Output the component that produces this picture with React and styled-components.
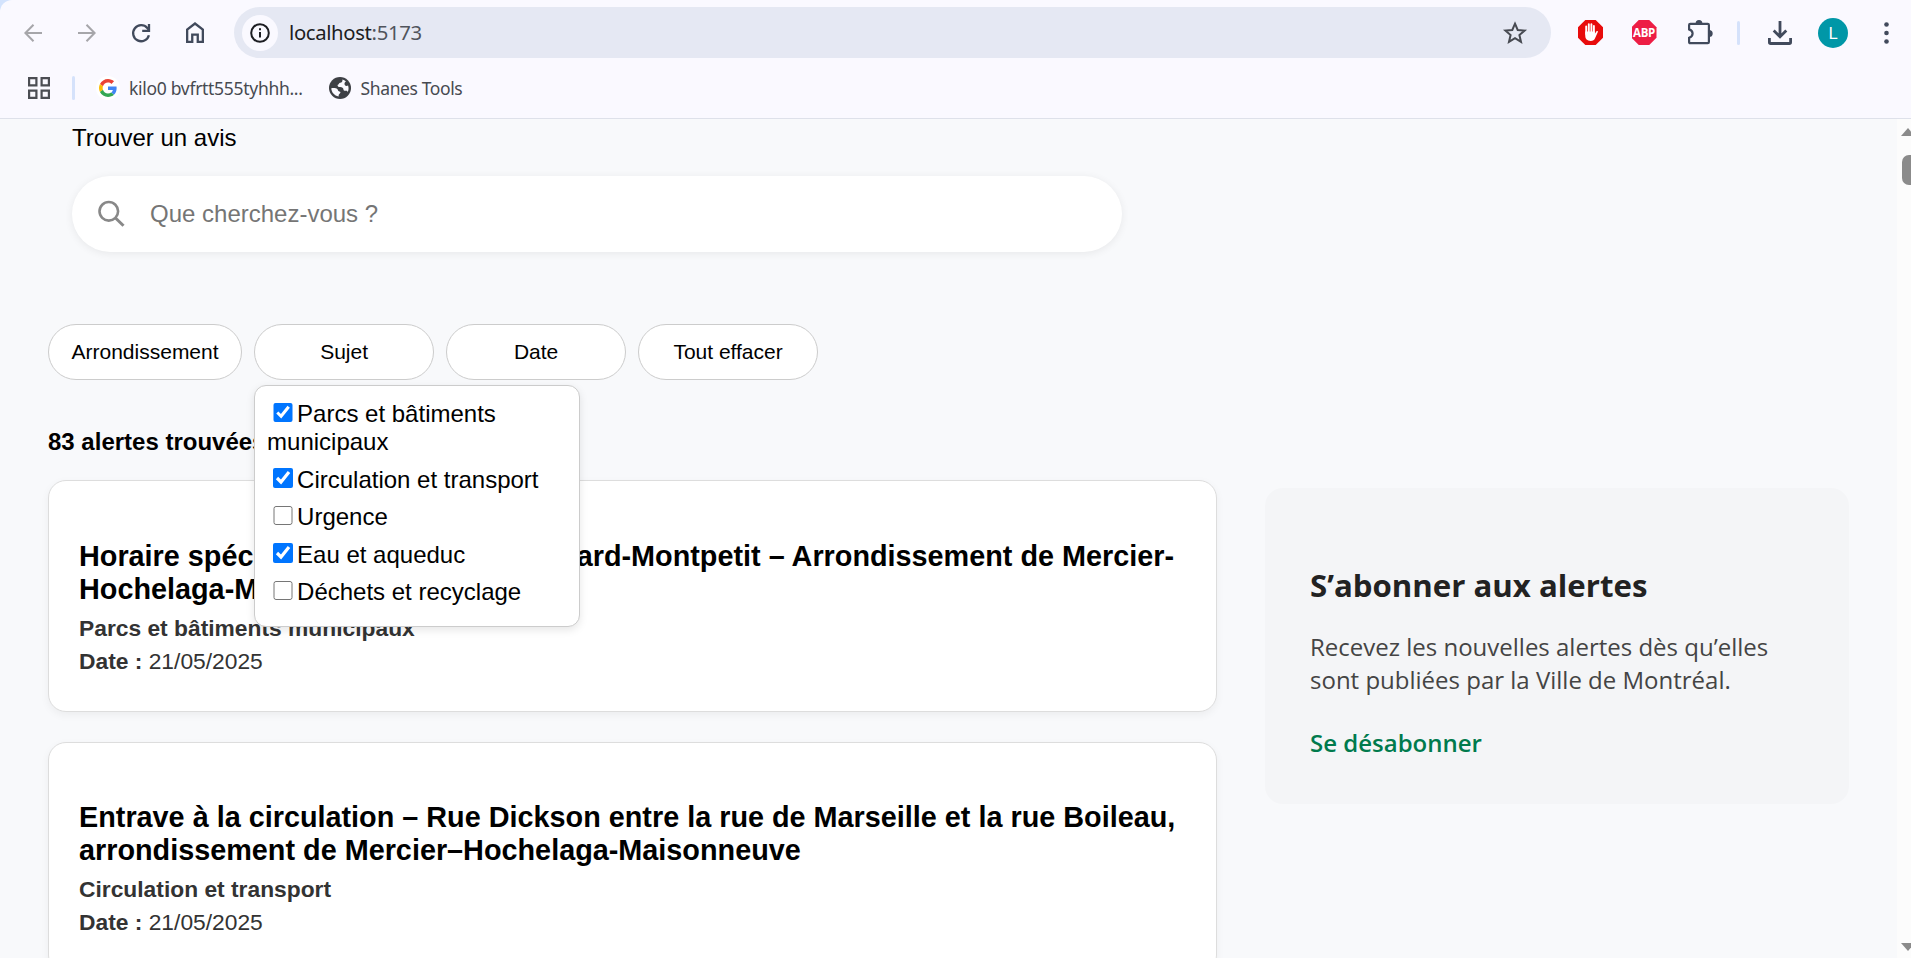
import React from "react";
import styled, { createGlobalStyle } from "styled-components";

const Global = createGlobalStyle`
  * { box-sizing: border-box; }
  body { margin: 0; overflow: hidden; background: #f8f9fb; }
`;

const arial = `"Liberation Sans", Arial, sans-serif`;
const humanist = `"Open Sans", "Noto Sans", sans-serif`;
const chromeText = `"Noto Sans", "Open Sans", sans-serif`;

const Window = styled.div`
  display: flex;
  flex-direction: column;
  width: 1911px;
  height: 958px;
  overflow: hidden;
  background: #d3e3fd;
`;

const BrowserHead = styled.header`
  flex: none;
  height: 119px;
  background: #faf9ff;
  border-bottom: 1px solid #dee1ea;
  border-top-left-radius: 12px;
`;

const Toolbar = styled.div`
  display: flex;
  align-items: center;
  height: 65px;
  padding-left: 18px;
`;

const ToolIcon = styled.span`
  display: flex;
  align-items: center;
  justify-content: center;
  flex: none;
  width: ${(p) => p.$w || 54}px;
  height: 40px;
  svg { display: block; overflow: visible; }
`;

const NavGroup = styled.div`
  display: flex;
  flex: none;
  width: 216px;
  margin-left: -12px;
`;

const AddressBar = styled.div`
  display: flex;
  align-items: center;
  flex: none;
  width: 1317px;
  height: 51px;
  margin-left: 12px;
  padding: 0 12px 0 8px;
  border-radius: 26px;
  background: #e5e8f3;
`;

const SiteInfo = styled.span`
  display: flex;
  align-items: center;
  justify-content: center;
  width: 36px;
  height: 36px;
  border-radius: 50%;
  background: #faf9ff;
`;

const Url = styled.span`
  flex: 1;
  margin-left: 11px;
  padding-bottom: 2px;
  font: 20.3px/28px ${chromeText};
  letter-spacing: -0.35px;
  color: #1c1d22;
  span { color: #50545c; }
`;

const Extensions = styled.div`
  display: flex;
  align-items: center;
  flex: none;
  margin-left: 12px;
`;

const Separator = styled.i`
  width: 3px;
  height: 24px;
  border-radius: 2px;
  background: #d5e2fb;
  margin: ${(p) => p.$m || "0"};
`;

const Avatar = styled.span`
  display: flex;
  align-items: center;
  justify-content: center;
  width: 30px;
  height: 30px;
  border-radius: 50%;
  background: #0097a7;
  color: #fff;
  font: 17px/30px Roboto, sans-serif;
`;

const Bookmarks = styled.nav`
  display: flex;
  align-items: center;
  height: 46px;
  padding-left: 28px;
`;

const Bookmark = styled.span`
  display: flex;
  align-items: center;
  gap: 9px;
  margin-left: ${(p) => p.$ml}px;
  font: 17.5px/24px ${chromeText};
  letter-spacing: ${(p) => p.$ls || 0}px;
  color: #474a51;
  white-space: nowrap;
  svg { display: block; }
`;

const Favicon = styled.span`
  display: flex;
  align-items: center;
  justify-content: center;
  width: 24px;
  height: 24px;
  border-radius: 50%;
  background: ${(p) => p.$bg || "transparent"};
`;

const Viewport = styled.div`
  display: flex;
  flex: 1;
  min-height: 0;
  background: #f8f9fb;
`;

const Page = styled.main`
  display: flex;
  align-items: flex-start;
  gap: 48px;
  flex: 1;
  min-width: 0;
  height: 839px;
  overflow: hidden;
  padding-left: 48px;
  font: 24px/27.6px ${arial};
  color: #000;
`;

const MainColumn = styled.section`
  flex: none;
  width: 1169px;
`;

const SearchSection = styled.div`
  padding: 5px 95px 0 24px;
`;

const SearchLabel = styled.div`
  height: 28px;
`;

const SearchPill = styled.div`
  display: flex;
  align-items: center;
  width: 1050px;
  height: 76px;
  margin-top: 24px;
  padding-left: 25px;
  gap: 24px;
  border-radius: 38px;
  background: #fff;
  box-shadow: 0 1.5px 9px rgba(0, 0, 0, 0.07);
`;

const SearchInput = styled.input`
  flex: 1;
  padding: 0;
  border: 0;
  outline: 0;
  background: transparent;
  font: 24px/28px ${arial};
  &::placeholder { color: #757575; opacity: 1; }
`;

const Filters = styled.div`
  display: flex;
  gap: 12px;
  margin-top: 72px;
`;

const FilterSlot = styled.div`
  position: relative;
`;

const FilterButton = styled.button`
  display: block;
  min-width: 180px;
  height: 56px;
  padding: 0 22.5px;
  border: 1px solid #ccc;
  border-radius: 30px;
  background: #fff;
  color: #000;
  font: 21px/24px ${arial};
`;

const Dropdown = styled.div`
  position: absolute;
  z-index: 5;
  top: 61px;
  left: 0;
  width: 326px;
  height: 242px;
  padding: 14px 12px 0;
  border: 1px solid #ccc;
  border-radius: 12px;
  background: #fff;
  box-shadow: 0 3px 9px rgba(0, 0, 0, 0.1);
`;

const Option = styled.label`
  display: block;
  margin-bottom: 9.5px;
  line-height: 28px;
`;

const Check = styled.input`
  width: 19.5px;
  height: 19.5px;
  margin: -2px 4.5px 4.5px 6px;
`;

const ResultCount = styled.h3`
  margin: 48px 0 24px;
  font: bold 24px/28px ${arial};
`;

const Card = styled.article`
  height: 231.5px;
  margin-bottom: 30px;
  padding: 58.6px 30px 0;
  border: 1px solid #ddd;
  border-radius: 18px;
  background: #fff;
  box-shadow: 0 3px 9px rgba(0, 0, 0, 0.05);
`;

const CardTitle = styled.h2`
  margin: 0 0 6px;
  font: bold 28.8px/33px ${arial};
`;

const CardLine = styled.p`
  margin: 0;
  font: 22.8px/33px ${arial};
  color: #333;
`;

const Aside = styled.aside`
  flex: none;
  width: 584px;
  height: 316px;
  margin-top: 369px;
  padding: 75px 45px 0;
  border-radius: 18px;
  background: #f4f5f7;
  font-family: ${humanist};
`;

const AsideTitle = styled.h3`
  margin: 0;
  font: bold 31.2px/44px ${humanist};
  color: #222;
`;

const AsideText = styled.p`
  margin: 23px 0 0;
  font: 24px/33px ${humanist};
  color: #444;
`;

const AsideLink = styled.a`
  display: block;
  margin-top: 30px;
  font: 600 24px/33px ${humanist};
  color: #007a4d;
`;

const Scrollbar = styled.div`
  display: flex;
  flex-direction: column;
  align-items: flex-start;
  flex: none;
  width: 14px;
  padding: 9px 0 7px 4px;
  overflow: hidden;
  background: #fcfcfc;
  svg { display: block; flex: none; }
`;

const Thumb = styled.div`
  flex: none;
  width: 15px;
  height: 30px;
  margin: 19px 0 auto 1px;
  border-radius: 7px;
  background: #8b8b8b;
`;

const BackIcon = () => (
  <svg width="18" height="18" viewBox="0 0 18 18" fill="none" stroke="#a6a6aa" strokeWidth="2">
    <path d="M18 9H1.5M9.5 .8L1.4 9l8.1 8.2" />
  </svg>
);
const ForwardIcon = () => (
  <svg width="18" height="18" viewBox="0 0 18 18" fill="none" stroke="#a6a6aa" strokeWidth="2">
    <path d="M0 9h16.5M8.500 .8L16.600 9l-8.100 8.200" />
  </svg>
);
const ReloadIcon = () => (
  <svg width="18" height="18" viewBox="0 0 18 18" fill="none" stroke="#414a5c" strokeWidth="2.3">
    <path d="M16.900 11.200A8 8 0 1 1 15.300 4.100L17 6" />
    <path d="M17 0v6.900h-6.800" />
  </svg>
);
const HomeIcon = () => (
  <svg width="18" height="21" viewBox="0 0 18 21" fill="none" stroke="#414a5c" strokeWidth="2.3">
    <path d="M1.150 19.800V7.600L9 1.500l7.850 6.100v12.200h-5.100v-7.200h-5.500v7.200z" />
  </svg>
);
const InfoIcon = () => (
  <svg width="20" height="20" viewBox="0 0 20 20" fill="none" stroke="#1c1d22" strokeWidth="2">
    <circle cx="10" cy="10" r="8.800" />
    <path d="M10 9v5.500M10 5.300v2" />
  </svg>
);
const StarIcon = () => (
  <svg width="24" height="23" viewBox="0 0 24 23" fill="none" stroke="#474a51" strokeWidth="2">
    <path d="M12 2.700l2.700 6.300 6.900.6-5.200 4.500 1.600 6.700-6-3.600-6 3.600 1.600-6.700L2.400 9.600l6.900-.6z" />
  </svg>
);
const HandIcon = () => (
  <svg width="25" height="25" viewBox="0 0 25 25">
    <path d="M7.300 0h10.400L25 7.300v10.400L17.700 25H7.300L0 17.700V7.300z" fill="#e80c0c" />
    <path d="M8.200 14V6.500M10.800 12V4.300M13.400 12V4.300M15.900 13V6" stroke="#fff" strokeWidth="1.900" strokeLinecap="round" />
    <path d="M7.250 11.500h9.600v2.200l1.500-2.200c.6-.8 1.900-.3 1.500.6l-2.800 6.200c-.8 1.700-2 2.600-4.400 2.600C9 20.900 7.250 19 7.250 16z" fill="#fff" />
  </svg>
);
const AbpShape = styled.span`
  display: flex;
  align-items: center;
  justify-content: center;
  width: 25px;
  height: 25px;
  clip-path: polygon(29% 0, 71% 0, 100% 29%, 100% 71%, 71% 100%, 29% 100%, 0 71%, 0 29%);
  background: #ed1e45;
  color: #fff;
  font: 700 11.5px/25px "Open Sans", sans-serif;
  letter-spacing: -0.3px;
`;
const PuzzleIcon = () => (
  <svg width="25" height="25" viewBox="0 0 25 25" fill="none" stroke="#414a5c" strokeWidth="2.200">
    <path d="M1.100 5q0-1.200 1.200-1.200H19.700q1.200 0 1.200 1.200V22q0 1.200-1.200 1.200H2.300q-1.200 0-1.200-1.200V17.800c2.600-.7 3.500-2.400 3.500-4.200s-.9-3.500-3.500-4.200z" />
    <path d="M7.600 3.700a3.400 3.600 0 0 1 6.800 0zM21 10a3.700 3.500 0 0 1 0 7z" fill="#414a5c" stroke="none" />
  </svg>
);
const DownloadIcon = () => (
  <svg width="24" height="24" viewBox="0 0 24 24" fill="none" stroke="#414a5c" strokeWidth="2.800">
    <path d="M12 0v15M5.700 9.600l6.300 6.200 6.300-6.200M1.400 17v4.200q0 1.300 1.300 1.300h18.600q1.300 0 1.300-1.300V17" />
  </svg>
);
const MoreIcon = () => (
  <svg width="5" height="22" viewBox="0 0 5 22" fill="#414a5c">
    <circle cx="2.500" cy="2.500" r="2.300" />
    <circle cx="2.500" cy="11" r="2.300" />
    <circle cx="2.500" cy="19.500" r="2.300" />
  </svg>
);
const AppsIcon = () => (
  <svg width="22" height="22" viewBox="0 0 22 22" fill="none" stroke="#4b4d53" strokeWidth="2.200">
    <path d="M1.100 1.100h7.300v7.300H1.100zM13.600 1.100h7.300v7.300h-7.300zM1.100 13.600h7.300v7.300H1.100zM13.600 13.600h7.300v7.300h-7.300z" />
  </svg>
);
const GoogleIcon = () => (
  <svg width="18" height="18" viewBox="0 0 48 48">
    <path fill="#EA4335" d="M24 9.500c3.540 0 6.710 1.220 9.210 3.600l6.850-6.850C35.900 2.380 30.470 0 24 0 14.620 0 6.510 5.380 2.560 13.220l7.980 6.190C12.430 13.720 17.740 9.500 24 9.500z" />
    <path fill="#4285F4" d="M46.980 24.550c0-1.570-.15-3.090-.38-4.550H24v9.020h12.940c-.58 2.960-2.260 5.480-4.780 7.180l7.730 6c4.510-4.180 7.090-10.360 7.090-17.650z" />
    <path fill="#FBBC05" d="M10.530 28.590c-.48-1.450-.76-2.990-.76-4.590s.27-3.140.76-4.590l-7.980-6.190C.92 16.460 0 20.120 0 24c0 3.880.92 7.540 2.560 10.780l7.970-6.190z" />
    <path fill="#34A853" d="M24 48c6.480 0 11.930-2.130 15.890-5.810l-7.730-6c-2.150 1.450-4.920 2.300-8.160 2.300-6.260 0-11.570-4.220-13.470-9.910l-7.980 6.190C6.510 42.620 14.620 48 24 48z" />
  </svg>
);
const GlobeIcon = () => (
  <svg width="22" height="22" viewBox="0 0 22 22">
    <circle cx="11" cy="11" r="11" fill="#3d4045" />
    <path d="M13.400 2.500c.3 1.900-.5 3-2.200 3.200-1.300.1-1.200 2-2.700 2.300.2 1.700 1 2 2.700 2 2 0 3.200.8 3.300 2.800.1 1.300 1.500 1 2.700 1 1 0 1.500.7 1.300 1.500 1.300-2.100 1.300-4.700.6-6.800-1.500.9-3.500.4-3.600-1.500-.1-1.500 1-2.200 1.500-2.400-1-1-2.200-1.700-3.600-2.100zM2.300 11.200c1.900-.4 4.700-.5 6 .9.900 1 .5 2.300 2 2.400 1.500.1 1.500 1.600.3 2.200-.8.4-1 1.300-1 2.700-4.200-.7-7.200-4.200-7.300-8.200z" fill="#faf9ff" />
  </svg>
);
const SearchIcon = () => (
  <svg width="29" height="28" viewBox="0 0 29 28" fill="none" stroke="#888" strokeWidth="2.600">
    <circle cx="11.800" cy="11.300" r="9.300" />
    <path d="M18.500 18l8 7.800" strokeWidth="3" />
  </svg>
);

const subjects = [
  ["Parcs et bâtiments municipaux", true],
  ["Circulation et transport", true],
  ["Urgence", false],
  ["Eau et aqueduc", true],
  ["Déchets et recyclage", false],
];

const alerts = [
  {
    title: "Horaire spécial pour la piscine Édouard-Montpetit – Arrondissement de Mercier-Hochelaga-Maisonneuve",
    topic: "Parcs et bâtiments municipaux",
    date: "21/05/2025",
  },
  {
    title: "Entrave à la circulation – Rue Dickson entre la rue de Marseille et la rue Boileau, arrondissement de Mercier–Hochelaga-Maisonneuve",
    topic: "Circulation et transport",
    date: "21/05/2025",
  },
];

export default function App() {
  return (
    <Window>
      <Global />
      <BrowserHead>
        <Toolbar>
          <NavGroup>
            <ToolIcon><BackIcon /></ToolIcon>
            <ToolIcon><ForwardIcon /></ToolIcon>
            <ToolIcon><ReloadIcon /></ToolIcon>
            <ToolIcon><HomeIcon /></ToolIcon>
          </NavGroup>
          <AddressBar>
            <SiteInfo><InfoIcon /></SiteInfo>
            <Url>localhost<span>:5173</span></Url>
            <ToolIcon $w={48}><StarIcon /></ToolIcon>
          </AddressBar>
          <Extensions>
            <ToolIcon><HandIcon /></ToolIcon>
            <ToolIcon><AbpShape>ABP</AbpShape></ToolIcon>
            <ToolIcon $w={58}><PuzzleIcon /></ToolIcon>
            <Separator $m="0 13px 0 8px" />
            <ToolIcon><DownloadIcon /></ToolIcon>
            <ToolIcon $w={52}><Avatar>L</Avatar></ToolIcon>
            <ToolIcon><MoreIcon /></ToolIcon>
          </Extensions>
        </Toolbar>
        <Bookmarks>
          <AppsIcon />
          <Separator $m="0 0 0 22px" />
          <Bookmark $ml={21} $ls={-0.3}>
            <Favicon $bg="#fff"><GoogleIcon /></Favicon>
            kilo0 bvfrtt555tyhhh...
          </Bookmark>
          <Bookmark $ml={25} $ls={-0.4}>
            <Favicon><GlobeIcon /></Favicon>
            Shanes Tools
          </Bookmark>
        </Bookmarks>
      </BrowserHead>
      <Viewport>
        <Page>
          <MainColumn>
            <SearchSection>
              <SearchLabel>Trouver un avis</SearchLabel>
              <SearchPill>
                <SearchIcon />
                <SearchInput placeholder="Que cherchez-vous ?" />
              </SearchPill>
            </SearchSection>
            <Filters>
              <FilterButton>Arrondissement</FilterButton>
              <FilterSlot>
                <FilterButton>Sujet</FilterButton>
                <Dropdown>
                  {subjects.map(([name, on]) => (
                    <Option key={name}>
                      <Check type="checkbox" defaultChecked={on} />
                      {name}
                    </Option>
                  ))}
                </Dropdown>
              </FilterSlot>
              <FilterButton>Date</FilterButton>
              <FilterButton>Tout effacer</FilterButton>
            </Filters>
            <ResultCount>83 alertes trouvées</ResultCount>
            {alerts.map((a) => (
              <Card key={a.title}>
                <CardTitle>{a.title}</CardTitle>
                <CardLine><b>{a.topic}</b></CardLine>
                <CardLine><b>Date :</b> {a.date}</CardLine>
              </Card>
            ))}
          </MainColumn>
          <Aside>
            <AsideTitle>S’abonner aux alertes</AsideTitle>
            <AsideText>Recevez les nouvelles alertes dès qu’elles sont publiées par la Ville de Montréal.</AsideText>
            <AsideLink>Se désabonner</AsideLink>
          </Aside>
        </Page>
        <Scrollbar>
          <svg width="14" height="8" viewBox="0 0 14 8"><path d="M7 0l7 8H0z" fill="#8b8b8b" /></svg>
          <Thumb />
          <svg width="14" height="8" viewBox="0 0 14 8"><path d="M7 8l7-8H0z" fill="#8b8b8b" /></svg>
        </Scrollbar>
      </Viewport>
    </Window>
  );
}
